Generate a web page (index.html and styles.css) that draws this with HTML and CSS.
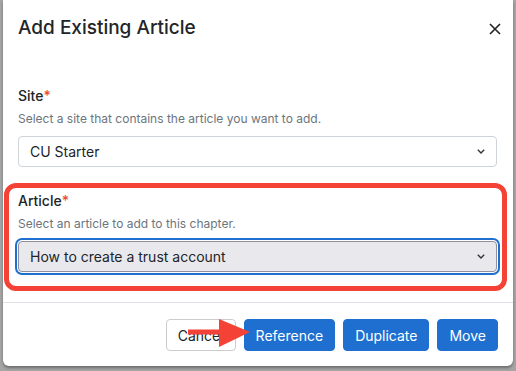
FILE: index.html
```html
<!DOCTYPE html>
<html>
<head>
<meta charset="utf-8">
<link rel="stylesheet" href="styles.css">
</head>
<body>
<div class="modal">
  <div class="modal-header">
    <h1 class="title">Add Existing Article</h1>
    <button class="close" aria-label="Close">
      <svg width="14" height="14" viewBox="0 0 14 14"><path d="M2 2 L12 12 M12 2 L2 12" stroke="#222" stroke-width="1.6" fill="none"/></svg>
    </button>
  </div>
  <div class="modal-body">
    <div class="group">
      <label class="label">Site<span class="req">*</span></label>
      <div class="help">Select a site that contains the article you want to add.</div>
      <div class="select">
        <span>CU Starter</span>
        <svg class="chev" width="8" height="5" viewBox="0 0 8 5"><path d="M0.8 0.8 L4 4 L7.2 0.8" stroke="#333" stroke-width="1.4" fill="none"/></svg>
      </div>
    </div>
    <div class="group group2">
      <label class="label">Article<span class="req">*</span></label>
      <div class="help">Select an article to add to this chapter.</div>
      <div class="select focused">
        <span>How to create a trust account</span>
        <svg class="chev" width="8" height="5" viewBox="0 0 8 5"><path d="M0.8 0.8 L4 4 L7.2 0.8" stroke="#333" stroke-width="1.4" fill="none"/></svg>
      </div>
    </div>
  </div>
  <div class="modal-footer">
    <button class="btn btn-light">Cancel</button>
    <button class="btn btn-primary">Reference</button>
    <button class="btn btn-primary">Duplicate</button>
    <button class="btn btn-primary">Move</button>
  </div>
</div>
<div class="highlight"></div>
<svg class="arrow" width="70" height="34" viewBox="0 0 70 34">
  <rect x="2" y="11.5" width="33" height="5" fill="#f44336"/>
  <polygon points="33,1 64,14 33,29" fill="#f44336"/>
</svg>
</body>
</html>
```

FILE: styles.css
```css
html, body {
  margin: 0;
  padding: 0;
}
body {
  width: 516px;
  height: 371px;
  background: #a5a5a5;
  font-family: "Inter", "Liberation Sans", sans-serif;
  color: #212529;
  position: relative;
  overflow: hidden;
}
.modal {
  margin-left: 3px;
  width: 510px;
  height: 366px;
  background: #fff;
  border-radius: 0 0 6px 6px;
  box-shadow: 0 2px 3px rgba(0,0,0,0.35);
  display: flex;
  flex-direction: column;
}
.modal-header {
  display: flex;
  align-items: center;
  justify-content: space-between;
  padding: 14px 11px 0 15px;
  box-sizing: border-box;
  height: 56px;
  flex: none;
}
.title {
  margin: 0;
  font-size: 19px;
  line-height: 28px;
  font-weight: 500;
  align-self: flex-start;
}
.close {
  border: 0;
  background: none;
  padding: 0;
  width: 14px;
  height: 14px;
  display: flex;
  margin-top: -12px;
}
.modal-body {
  padding: 29px 16px 0 15px;
  height: 246px;
  box-sizing: border-box;
  flex: none;
}
.group2 {
  margin-top: 23px;
}
.label {
  display: block;
  font-size: 14px;
  line-height: 22px;
  font-weight: 500;
}
.req {
  color: #f0463c;
}
.help {
  margin-top: 3px;
  font-size: 12px;
  line-height: 18px;
  color: #6c757d;
}
.select {
  margin-top: 8px;
  height: 31px;
  box-sizing: border-box;
  border: 1px solid #ced4da;
  border-radius: 4px;
  display: flex;
  align-items: center;
  justify-content: space-between;
  padding: 0 11px 0 11px;
  font-size: 14px;
  line-height: 22px;
}
.select.focused {
  background: #e9e9ed;
  border-color: #8f8f9d;
  box-shadow: 0 0 0 1px #fff, 0 0 0 3px #1f6fd0;
}
.chev {
  display: block;
}
.modal-footer {
  border-top: 1px solid #dee2e6;
  padding: 16px 15px 0 0;
  display: flex;
  justify-content: flex-end;
  align-items: flex-start;
  gap: 8px;
  flex: 1;
}
.btn {
  height: 32px;
  box-sizing: border-box;
  padding: 0 11px;
  border-radius: 4px;
  font-family: inherit;
  font-size: 14px;
  border: 1px solid transparent;
}
.btn-light {
  background: #fff;
  border-color: #ccc;
  color: #212529;
}
.btn-primary {
  background: #1e6fcf;
  border-color: #1e6fcf;
  color: #fff;
}
.highlight {
  position: absolute;
  left: 4px;
  top: 183px;
  width: 503px;
  height: 108px;
  box-sizing: border-box;
  border: 5px solid #f44336;
  border-radius: 12px;
}
.arrow {
  position: absolute;
  left: 186px;
  top: 318px;
}
```
